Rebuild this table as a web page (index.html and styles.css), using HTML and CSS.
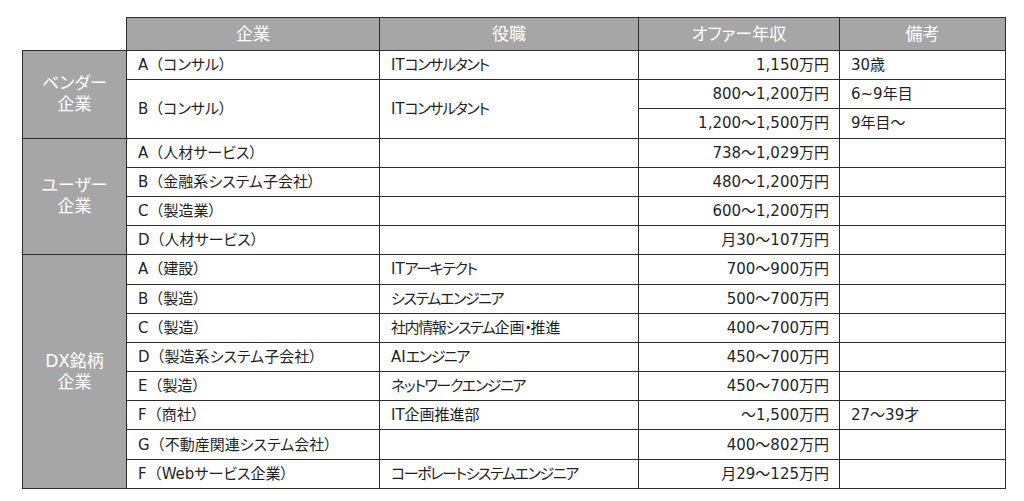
FILE: index.html
```html
<!DOCTYPE html>
<html lang="ja">
<head>
<meta charset="utf-8">
<title>オファー年収</title>
<link rel="stylesheet" href="styles.css">
</head>
<body>
<table class="offers">
  <colgroup>
    <col class="c-cat"><col class="c-co"><col class="c-role"><col class="c-pay"><col class="c-note">
  </colgroup>
  <thead>
    <tr class="head">
      <th class="blank"></th>
      <th>企業</th>
      <th>役職</th>
      <th>オファー年収</th>
      <th>備考</th>
    </tr>
  </thead>
  <tbody>
    <tr>
      <th class="cat" rowspan="3">ベンダー<br>企業</th>
      <td class="co">A<span class="p">（</span>コンサル）</td>
      <td class="role"><span class="lat">IT</span>コンサルタント</td>
      <td class="pay">1,150万円</td>
      <td class="note">30歳</td>
    </tr>
    <tr>
      <td class="co" rowspan="2">B<span class="p">（</span>コンサル）</td>
      <td class="role" rowspan="2"><span class="lat">IT</span>コンサルタント</td>
      <td class="pay">800～1,200万円</td>
      <td class="note">6~9年目</td>
    </tr>
    <tr>
      <td class="pay">1,200～1,500万円</td>
      <td class="note">9年目～</td>
    </tr>

    <tr>
      <th class="cat" rowspan="4">ユーザー<br>企業</th>
      <td class="co">A<span class="p">（</span>人材サービス）</td>
      <td class="role"></td>
      <td class="pay">738～1,029万円</td>
      <td class="note"></td>
    </tr>
    <tr>
      <td class="co">B<span class="p">（</span>金融系システム子会社）</td>
      <td class="role"></td>
      <td class="pay">480～1,200万円</td>
      <td class="note"></td>
    </tr>
    <tr>
      <td class="co">C<span class="p">（</span>製造業）</td>
      <td class="role"></td>
      <td class="pay">600～1,200万円</td>
      <td class="note"></td>
    </tr>
    <tr>
      <td class="co">D<span class="p">（</span>人材サービス）</td>
      <td class="role"></td>
      <td class="pay">月30～107万円</td>
      <td class="note"></td>
    </tr>

    <tr>
      <th class="cat" rowspan="8">DX銘柄<br>企業</th>
      <td class="co">A<span class="p">（</span>建設）</td>
      <td class="role"><span class="lat">IT</span>アーキテクト</td>
      <td class="pay">700～900万円</td>
      <td class="note"></td>
    </tr>
    <tr>
      <td class="co">B<span class="p">（</span>製造）</td>
      <td class="role">システムエンジニア</td>
      <td class="pay">500～700万円</td>
      <td class="note"></td>
    </tr>
    <tr>
      <td class="co">C<span class="p">（</span>製造）</td>
      <td class="role">社内情報システム<span class="kj">企画</span>・<span class="kj">推進</span></td>
      <td class="pay">400～700万円</td>
      <td class="note"></td>
    </tr>
    <tr>
      <td class="co">D<span class="p">（</span>製造系システム子会社）</td>
      <td class="role"><span class="lat">AI</span>エンジニア</td>
      <td class="pay">450～700万円</td>
      <td class="note"></td>
    </tr>
    <tr>
      <td class="co">E<span class="p">（</span>製造）</td>
      <td class="role">ネットワークエンジニア</td>
      <td class="pay">450～700万円</td>
      <td class="note"></td>
    </tr>
    <tr>
      <td class="co">F<span class="p">（</span>商社）</td>
      <td class="role"><span class="lat">IT</span><span class="kj">企画推進部</span></td>
      <td class="pay">～1,500万円</td>
      <td class="note">27～39才</td>
    </tr>
    <tr>
      <td class="co">G<span class="p">（</span>不動産関連システム会社）</td>
      <td class="role"></td>
      <td class="pay">400～802万円</td>
      <td class="note"></td>
    </tr>
    <tr>
      <td class="co">F<span class="p">（</span>Webサービス企業）</td>
      <td class="role">コーポレートシステムエンジニア</td>
      <td class="pay">月29～125万円</td>
      <td class="note"></td>
    </tr>
  </tbody>
</table>
</body>
</html>
```

FILE: styles.css
```css
html, body {
  margin: 0;
  padding: 0;
  background: #ffffff;
}

body {
  font-family: "DejaVu Sans", "Noto Sans CJK JP", sans-serif;
  color: #1f1f1f;
}

.offers {
  margin: 17px 0 0 22px;
  border-collapse: collapse;
  table-layout: fixed;
  width: 983px;
  font-size: 15px;
  font-feature-settings: "palt" 1;
}

.c-cat { width: 104px; }
.c-co { width: 253px; }
.c-role { width: 259px; }
.c-pay { width: 201px; }
.c-note { width: 166px; }

.offers th,
.offers td {
  border: 1px solid #2b2b2b;
  padding: 0 11px;
  white-space: nowrap;
  vertical-align: middle;
  line-height: 20px;
}

.head {
  height: 33px;
}

.head th {
  background: #a6a6a6;
  color: #ffffff;
  font-weight: normal;
  font-size: 17px;
  text-align: center;
  padding: 0;
}

.offers .blank {
  background: #ffffff;
  border-top: none;
  border-left: none;
}

tbody tr {
  height: 29.2px;
}

.offers .cat {
  background: #a6a6a6;
  color: #ffffff;
  font-weight: normal;
  font-size: 17px;
  line-height: 21px;
  text-align: center;
  padding: 0;
}

.co,
.role,
.note {
  text-align: left;
}

.co .p {
  font-feature-settings: normal;
}

.role {
  letter-spacing: -1.4px;
}

.role .lat {
  letter-spacing: 0;
}

.role .kj {
  letter-spacing: 0;
}

.pay {
  text-align: right;
}

.offers .pay {
  padding-right: 10px;
}
```
